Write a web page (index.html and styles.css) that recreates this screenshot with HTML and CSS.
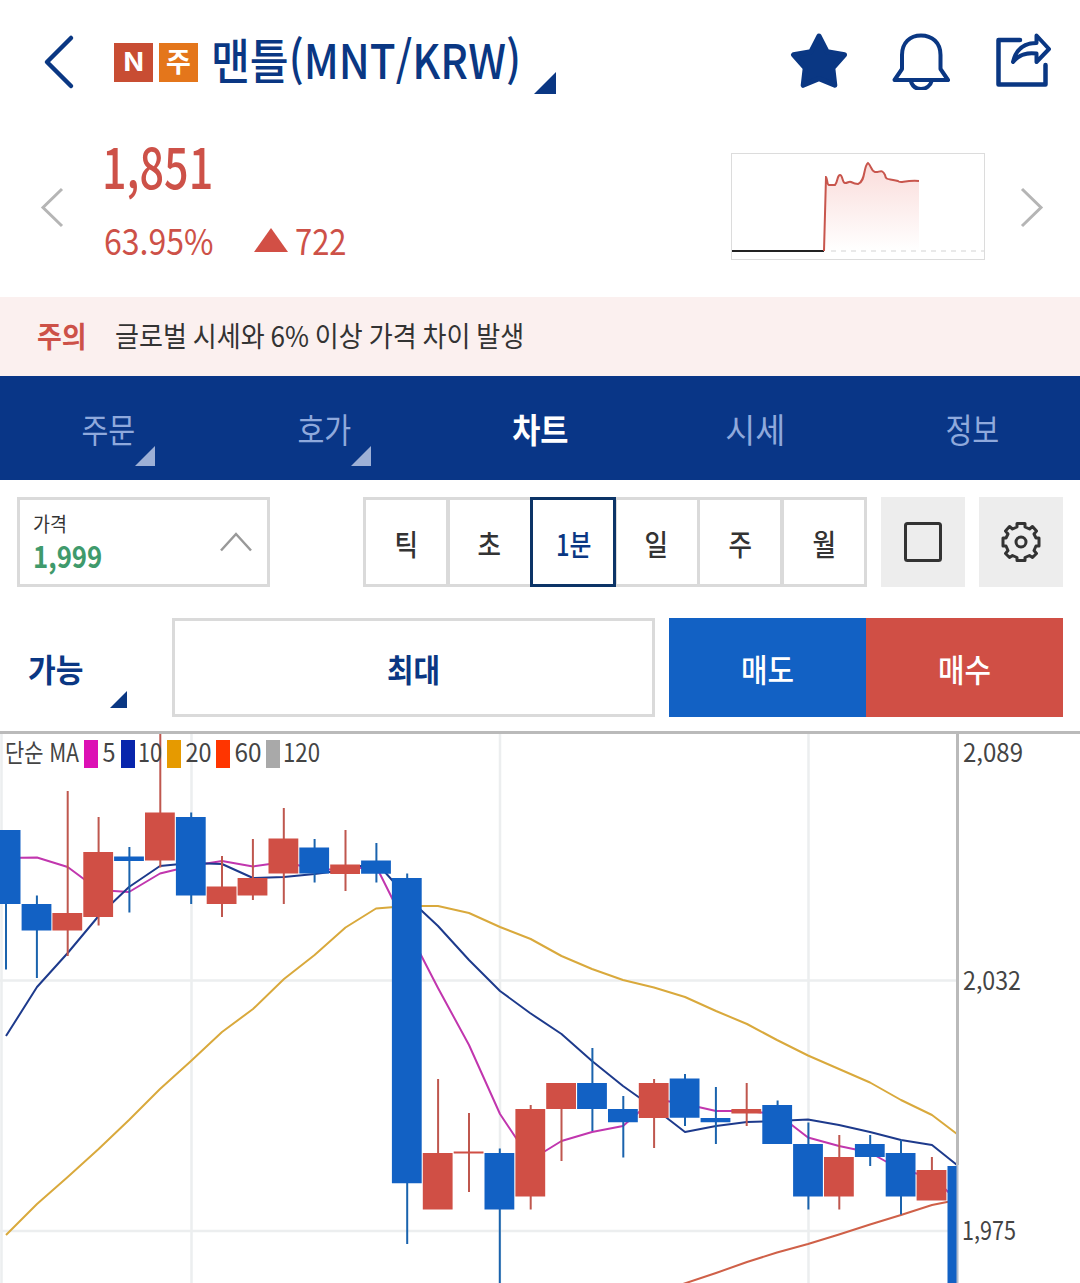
FILE: index.html
```html
<!DOCTYPE html>
<html lang="ko">
<head>
<meta charset="utf-8">
<title>맨틀(MNT/KRW)</title>
<link rel="stylesheet" href="styles.css">
</head>
<body>
<div class="app">
  <header class="header">
    <svg class="back" width="32" height="56" viewBox="0 0 32 56"><path d="M28 4 4 28 28 52" fill="none" stroke="#0a3783" stroke-width="4.5" stroke-linecap="round" stroke-linejoin="round"/></svg>
    <span class="badge badge-new"><b class="fit">N</b></span>
    <span class="badge badge-warn"><b class="fit">주</b></span>
    <h1 class="title"><span class="fit">맨틀(MNT/KRW)</span></h1>
    <i class="corner corner-title"></i>
    <div class="actions">
      <svg width="58" height="58" viewBox="0 0 58 58"><path d="M29 4 37.2 19.8 54.5 22.8 42.8 36 44.8 53.3 29 46.6 13.200 53.300 15.200 36 3.500 22.800 20.800 19.800Z" fill="#0a3783" stroke="#0a3783" stroke-width="5" stroke-linejoin="round"/></svg>
      <svg width="58" height="58" viewBox="0 0 58 58"><g fill="none" stroke="#0a3783" stroke-width="4" stroke-linejoin="round"><path d="M10 37V23C10 10.500 18 3.500 29 3.500S48.500 10.500 48.500 23V37L56 48H2.500Z"/><path d="M18.500 48C20 54 24 57 29 57S38.500 54 40 48"/></g></svg>
      <svg width="58" height="58" viewBox="0 0 58 58"><g fill="none" stroke="#0a3783" stroke-width="4.500" stroke-linejoin="round" stroke-linecap="round"><path d="M26 8H4.500V52.500H51.500V33"/><path d="M19 30C22 17 30 11 42.500 11V3.500L55 17 42.500 30V21.500C32 20 25 22.500 19 30Z" stroke-width="4"/></g></svg>
    </div>
  </header>

  <section class="quote">
    <svg class="prev" width="24" height="42" viewBox="0 0 24 42"><path d="M22 2 3 20.500 22 39" fill="none" stroke="#b5b5b5" stroke-width="3"/></svg>
    <div class="figures">
      <div class="price"><span class="fit">1,851</span></div>
      <div class="change">
        <div class="rate"><span class="fit">63.95%</span></div>
        <svg width="34" height="24" viewBox="0 0 34 24"><path d="M17 0 34 24H0Z" fill="#d24f45"/></svg>
        <div class="diff"><span class="fit">722</span></div>
      </div>
    </div>
    <svg class="spark" width="254" height="107" viewBox="0 0 254 107">
      <defs><linearGradient id="fade" x1="0" y1="0" x2="0" y2="1"><stop offset="0" stop-color="#fadcda"/><stop offset="1" stop-color="#fff"/></linearGradient></defs>
      <rect x=".5" y=".5" width="253" height="106" fill="#fff" stroke="#dcdcdc"/>
      <path d="M93 98 95 24C96 24 96 32 98 32H104C107 29 106 22 109 22S111 30 114 30 118 28 120 29 126 31 127 31C135 28 132 14 137 10 140 12 140 18 144 19S151 15 154 22C155 28 158 25 167 28 169 31 173 27 188 28V98Z" fill="url(#fade)"/>
      <path d="M100 98H253" stroke="#e2e2e2" stroke-width="1.500" stroke-dasharray="5 5"/>
      <path d="M1 98H93" stroke="#222" stroke-width="2"/>
      <path d="M93 98 95 24C96 24 96 32 98 32H104C107 29 106 22 109 22S111 30 114 30 118 28 120 29 126 31 127 31C135 28 132 14 137 10 140 12 140 18 144 19S151 15 154 22C155 28 158 25 167 28 169 31 173 27 188 28" fill="none" stroke="#c8564d" stroke-width="2"/>
    </svg>
    <svg class="next" width="24" height="42" viewBox="0 0 24 42"><path d="M2 2 21 20.500 2 39" fill="none" stroke="#b5b5b5" stroke-width="3"/></svg>
  </section>

  <section class="notice">
    <b class="notice-tag"><span class="fit">주의</span></b>
    <p class="notice-text"><span class="fit">글로벌 시세와 6% 이상 가격 차이 발생</span></p>
  </section>

  <nav class="tabs">
    <a class="tab"><span class="fit">주문</span><i class="corner"></i></a>
    <a class="tab"><span class="fit">호가</span><i class="corner"></i></a>
    <a class="tab tab-on"><span class="fit">차트</span></a>
    <a class="tab tab-wide"><span class="fit">시세</span></a>
    <a class="tab"><span class="fit">정보</span></a>
  </nav>

  <section class="tools">
    <div class="select">
      <div>
        <div class="select-label"><span class="fit">가격</span></div>
        <div class="select-value"><span class="fit">1,999</span></div>
      </div>
      <svg width="34" height="20" viewBox="0 0 34 20"><path d="M2 18.500 17 2 32 18.500" fill="none" stroke="#999" stroke-width="2.500"/></svg>
    </div>
    <div class="periods">
      <span class="period"><span class="fit">틱</span></span>
      <span class="period"><span class="fit">초</span></span>
      <span class="period period-on"><span class="fit">1분</span></span>
      <span class="period"><span class="fit">일</span></span>
      <span class="period"><span class="fit">주</span></span>
      <span class="period"><span class="fit">월</span></span>
    </div>
    <div class="tool"><svg width="40" height="42" viewBox="0 0 40 42"><rect x="2.500" y="2.500" width="35" height="37" rx="2" fill="none" stroke="#333" stroke-width="3"/></svg></div>
    <div class="tool"><svg width="40" height="42" viewBox="-20 -21 40 42"><g fill="none" stroke="#333" stroke-width="3" stroke-linejoin="round"><path d="M-4-18.500H4V-15L8.500-13 11.500-15.500 15.500-11 13-8 15-4H18V4H15L13 8.500 15.500 11.500 11.500 15.500 8.500 13.500 4 15.500V18.500H-4V15.500L-8.500 13.500-11.500 15.500-15.500 11.500-13 8.500-15 4H-18V-4H-15L-13-8-15.500-11-11.500-15.500-8.500-13-4-15Z"/><circle r="5"/></g></svg></div>
  </section>

  <section class="order">
    <div class="avail"><span class="fit">가능</span><i class="corner"></i></div>
    <div class="max"><span class="fit">최대</span></div>
    <div class="sell"><span class="fit">매도</span></div>
    <div class="buy"><span class="fit">매수</span></div>
  </section>

  <svg class="chart" width="1080" height="552" viewBox="0 731 1080 552">
    <path d="M1.500 733V1283M191.500 733V1283M500 733V1283M808.500 733V1283M0 980.500H957M0 1231H957" stroke="#eceeef" stroke-width="2.500"/>
    <g fill="none" stroke-width="2" stroke-linejoin="round">
      <path stroke="#d9a93c" d="M6 1235 37 1204 67.700 1177 98.600 1149 129 1120 160 1089 191 1061 222 1032 253 1009 284 979 314.600 955 345.500 927.500 376 908.500 407 906 438 906 469 913 500 927 530.700 939 561.500 956 592 969 623 980 654 987.500 685 997 716 1011 747 1024 777 1040 808 1055.500 839 1069 870 1082.500 901 1100 932 1115 957 1134"/>
      <path stroke="#cf6048" d="M683 1284 716 1273 747 1262 777 1252.500 808 1244 839 1234.500 870 1224.500 901 1215 932 1205 957 1200"/>
      <path stroke="#c136ae" d="M6 858 37 857.500 67.700 867 98.600 890 129 892 160 873.500 191 866 222 861 253 866.500 284 862 314.600 869 345.500 870 376 866 407 928 438 988 469 1045 500 1114 530.700 1160 561.500 1141 592 1132 623 1126 654 1099 685 1104 716 1111 747 1111 777.600 1114 808 1137.500 839 1146 870 1152.500 901 1170 932 1177 957 1200"/>
      <path stroke="#1d3a8c" d="M6 1036 37 987 67.700 953 98.600 916 129 887 160 866 191 863 222 864 253 878 284 877 314.600 874 345.500 870 376 862 407 897 438 926 469 960 500 991 530 1013 561.500 1034 592 1061 623 1086 654 1108 685 1132 716 1126 747 1122 777 1121 808 1119.500 839 1125 870 1132 901 1140 932 1145 957 1165"/>
    </g>
    <path stroke="#bf574e" stroke-width="2" d="M67.700 791V956M98.600 817V925.500M160.300 734V867.500M222 856V917M252.900 839V900M283.800 808V904M345.500 830V891M438.100 1079V1155M469 1113V1192M530.700 1105V1209.500M561.500 1085V1161M654.100 1079V1148M746.700 1083V1126M839.300 1135V1209.500M931.900 1157V1175"/>
    <path stroke="#1a63ad" stroke-width="2" d="M6 900V969.500M36.900 895.500V978M129.400 847V912.500M191.200 812.500V904M314.600 839V882.500M376.400 843V882.500M407.200 873.500V1244M499.800 1148.500V1283M592.400 1048V1131M623.300 1096V1157.500M685 1074V1126M715.900 1087V1144M777.600 1100.500V1110M808.400 1122.500V1209.500M870.200 1135V1166M901 1140V1214.500"/>
    <path fill="#d04f45" d="M52.400 913h29.800v17.500h-29.800zM83.300 852h29.800v65h-29.800zM145 812.500h29.800v48h-29.800zM206.700 886.500h29.800v17.500h-29.800zM237.600 878h29.800v17.500h-29.800zM268.500 838.500h29.800v35h-29.800zM330.200 864.500h29.800v9.500h-29.800zM422.800 1153h29.800v56.500h-29.800zM453.700 1151.500h29.800v2h-29.800zM515.400 1109h29.800v87.500h-29.800zM546.200 1083h29.800v26h-29.800zM638.800 1083h29.800v35h-29.800zM731.400 1109h29.800v4.500h-29.800zM824 1157h29.800v39.500h-29.800zM916.600 1170h29.800v30.500h-29.800z"/>
    <path fill="#1261c4" d="M0 830h20.500v74h-20.500zM21.600 904h29.800v26.500h-29.800zM114.100 856.500h29.800v4.500h-29.800zM175.900 817h29.800v78.500h-29.800zM299.300 847.500h29.800v26h-29.800zM361.100 860.500h29.800v13.200h-29.800zM391.900 878h29.800v305.300h-29.800zM484.500 1153h29.800v56.500h-29.800zM577.100 1083h29.800v26h-29.800zM608 1109h29.800v13.200h-29.800zM669.700 1078.500h29.800v39.200h-29.800zM700.600 1118h29.800v4.200h-29.800zM762.300 1105h29.800v39h-29.800zM793.100 1144h29.800v52.500h-29.800zM854.900 1144h29.800v13h-29.800zM885.700 1153h29.800v43.500h-29.800zM947.500 1166h9.500v117h-9.500z"/>
    <path d="M0 732.500H1080M957.500 732V1165" stroke="#bababa" stroke-width="3"/>
    <path d="M957.500 1165V1283" stroke="#b3bccb" stroke-width="2"/>
    <path fill="#dc10b4" d="M84 740h14v28h-14z"/>
    <path fill="#0825ac" d="M121 740h14v28h-14z"/>
    <path fill="#e69a00" d="M167 740h14v28h-14z"/>
    <path fill="#ff3500" d="M216 740h14v28h-14z"/>
    <path fill="#a9a9a9" d="M266 740h14v28h-14z"/>
    <g class="chart-text">
      <text x="5" y="762" textLength="74" lengthAdjust="spacingAndGlyphs">단순 MA</text>
      <text x="102.500" y="762" textLength="13" lengthAdjust="spacingAndGlyphs">5</text>
      <text x="138" y="762" textLength="24" lengthAdjust="spacingAndGlyphs">10</text>
      <text x="185.500" y="762" textLength="26" lengthAdjust="spacingAndGlyphs">20</text>
      <text x="234.500" y="762" textLength="27" lengthAdjust="spacingAndGlyphs">60</text>
      <text x="283" y="762" textLength="37" lengthAdjust="spacingAndGlyphs">120</text>
      <text x="963" y="761.500" textLength="60" lengthAdjust="spacingAndGlyphs">2,089</text>
      <text x="963" y="989.500" textLength="58" lengthAdjust="spacingAndGlyphs">2,032</text>
      <text x="962" y="1240" textLength="54" lengthAdjust="spacingAndGlyphs">1,975</text>
    </g>
  </svg>
</div>
</body>
</html>
```

FILE: styles.css
```css
* { box-sizing: border-box; }
body {
  margin: 0;
  background: #fff;
  color: #333;
  font-family: "Noto Sans CJK KR", "Noto Sans", sans-serif;
}
h1, p { margin: 0; font-weight: 400; }
svg { display: block; flex: none; }
.app { width: 1080px; height: 1283px; overflow: hidden; display: flex; flex-direction: column; }

/* Horizontally condensed text */
.fit { display: inline-block; white-space: nowrap; line-height: 1; transform: scaleX(var(--sx, .9)); }
.title .fit, .figures .fit, .notice .fit, .select .fit { transform-origin: left center; }

.corner { width: 22px; height: 22px; background: #0a3783; clip-path: polygon(100% 0, 100% 100%, 0 100%); }

.header { height: 124px; padding: 0 28px 0 43px; display: flex; align-items: center; }
.badge { width: 39px; height: 39px; flex: none; display: flex; align-items: center; justify-content: center; color: #fff; font-size: 27px; line-height: 1; --sx: 1; }
.badge-new { margin-left: 39px; padding-bottom: 4px; background: #c84d33; font-size: 26px; --sx: 1.15; }
.badge-warn { margin-left: 6px; padding-bottom: 3px; background: #e4761b; }
.title { width: 323px; flex: none; margin-left: 13px; height: 60px; padding-bottom: 9px; display: flex; align-items: center; color: #0a3783; font-size: 48px; font-weight: 500; --sx: .88; }
.corner-title { flex: none; margin-top: 42px; }
.actions { margin-left: auto; margin-top: -2px; display: flex; gap: 44px; }

.quote { height: 173px; padding: 0 36px 0 40px; display: flex; align-items: flex-start; color: #cd5148; }
.prev, .next { margin-top: 63px; }
.figures { width: 400px; margin-left: 38px; }
.price { height: 86px; padding-bottom: 4px; display: flex; align-items: center; font-size: 56px; font-weight: 500; --sx: .77; }
.change { height: 60px; display: flex; align-items: center; font-size: 36px; }
.rate { width: 152px; padding: 0 0 3px 2px; --sx: .89; display: flex; }
.diff { margin-left: 7px; padding-bottom: 3px; --sx: .86; display: flex; }
.spark { margin: 29px 35px 0 auto; }

.notice { height: 79px; flex: none; padding: 0 0 3px 37px; display: flex; align-items: center; background: #fbf0ef; }
.notice-tag { width: 78px; color: #cd5148; font-size: 29px; display: flex; --sx: .93; }
.notice-text { font-size: 28px; word-spacing: -1.5px; display: flex; --sx: .93; }

.tabs { height: 104px; flex: none; display: grid; grid-template-columns: repeat(5, 1fr); background: #093687; }
.tab { position: relative; padding-top: 2px; display: flex; align-items: center; justify-content: center; color: #8fa9dc; font-size: 34px; --sx: .86; }
.tab-wide { padding-right: 2px; --sx: .96; }
.tab-on { color: #fff; font-weight: 700; --sx: .9; }
.tab .corner { position: absolute; right: 61px; bottom: 14px; width: 20px; height: 20px; background: #9db0d6; }

.tools { height: 124px; flex: none; margin-top: 17px; padding: 0 17px; display: flex; }
.select { width: 253px; height: 90px; padding: 0 14px 0 13px; border: 3px solid #dadada; display: flex; align-items: center; justify-content: space-between; }
.select-label { height: 28px; padding-top: 2px; font-size: 20px; display: flex; --sx: .92; }
.select-value { height: 32px; font-size: 30px; font-weight: 700; color: #3f9a6c; display: flex; --sx: .86; }
.periods { width: 504px; height: 90px; margin-left: 93px; display: flex; }
.period { width: 86px; flex: none; margin-right: -2.4px; padding-top: 2px; border: 3px solid #dadada; display: flex; align-items: center; justify-content: center; font-size: 29px; font-weight: 500; --sx: .88; }
.period-on { position: relative; border-color: #0c3467; color: #0a3783; --sx: .82; }
.tool { width: 84px; height: 90px; margin-left: 14px; display: flex; align-items: center; justify-content: center; background: #ededed; }

.order { height: 99px; flex: none; margin: -3px 17px 14px 28px; display: flex; font-size: 32px; font-weight: 700; }
.order > div { display: flex; align-items: center; justify-content: center; }
.order .avail { position: relative; width: 144px; justify-content: flex-start; color: #0a3783; --sx: .94; }
.order .avail .fit { transform-origin: left center; }
.avail .corner { position: absolute; left: 82px; bottom: 9px; width: 17px; height: 17px; }
.max { width: 483px; margin-right: 14px; border: 3px solid #dadada; color: #0a3783; }
.sell, .buy { width: 197px; color: #fff; font-weight: 500; }
.sell { background: #1261c4; }
.buy { background: #d04f45; }

.chart-text { font-size: 25px; fill: #444; }
```
